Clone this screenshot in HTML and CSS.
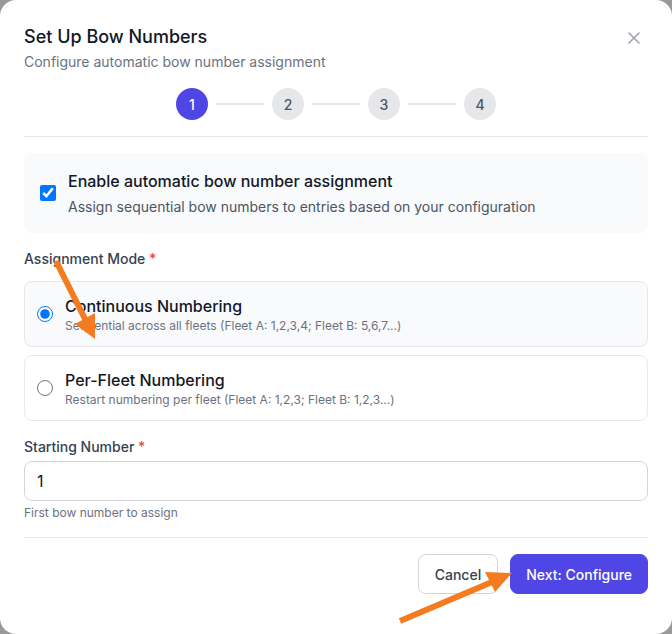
FILE: index.html
```html
<!DOCTYPE html>
<html lang="en">
<head>
<meta charset="utf-8">
<title>Set Up Bow Numbers</title>
<link rel="stylesheet" href="styles.css">
</head>
<body>
<div class="dialog">
  <div class="header">
    <div class="titles">
      <h2 class="title">Set Up Bow Numbers</h2>
      <p class="subtitle">Configure automatic bow number assignment</p>
    </div>
    <button class="close" aria-label="Close">
      <svg width="12" height="12" viewBox="0 0 12 12"><path d="M1 1L11 11M11 1L1 11" stroke="#9ca3af" stroke-width="1.6" stroke-linecap="round"/></svg>
    </button>
  </div>
  <div class="stepper">
    <span class="step active">1</span><span class="bar"></span>
    <span class="step">2</span><span class="bar"></span>
    <span class="step">3</span><span class="bar"></span>
    <span class="step">4</span>
  </div>
  <hr class="divider">
  <div class="content">
    <label class="enable-card">
      <input type="checkbox" class="check" checked>
      <span class="enable-text">
        <span class="enable-title">Enable automatic bow number assignment</span>
        <span class="enable-desc">Assign sequential bow numbers to entries based on your configuration</span>
      </span>
    </label>

    <div class="field">
      <div class="label">Assignment Mode <span class="req">*</span></div>
      <div class="options">
        <label class="option selected">
          <input type="radio" name="mode" class="radio" checked>
          <span class="opt-text">
            <span class="opt-title">Continuous Numbering</span>
            <span class="opt-desc">Sequential across all fleets (Fleet A: 1,2,3,4; Fleet B: 5,6,7...)</span>
          </span>
        </label>
        <label class="option">
          <input type="radio" name="mode" class="radio">
          <span class="opt-text">
            <span class="opt-title">Per-Fleet Numbering</span>
            <span class="opt-desc">Restart numbering per fleet (Fleet A: 1,2,3; Fleet B: 1,2,3...)</span>
          </span>
        </label>
      </div>
    </div>

    <div class="field">
      <div class="label label-sm">Starting Number <span class="req">*</span></div>
      <input class="text-input" type="text" value="1">
      <div class="help">First bow number to assign</div>
    </div>
  </div>
  <hr class="divider">
  <div class="footer">
    <button class="btn btn-secondary">Cancel</button>
    <button class="btn btn-primary">Next: Configure</button>
  </div>
</div>
<svg class="annotations" width="672" height="634" viewBox="0 0 672 634">
  <line x1="56" y1="261" x2="86" y2="321" stroke="#f47b20" stroke-width="6"/>
  <polygon points="95,339 75,324 95,313" fill="#f47b20"/>
  <line x1="400" y1="621" x2="492" y2="582" stroke="#f47b20" stroke-width="6"/>
  <polygon points="512,573 495,592 485,572" fill="#f47b20"/>
</svg>
</body>
</html>
```
FILE: styles.css
```css
* { box-sizing: border-box; }
html, body { margin: 0; padding: 0; }
body {
  background: #999999;
  font-family: Inter, "Noto Sans", sans-serif;
  color: #111827;
  width: 672px;
  height: 634px;
  overflow: hidden;
  position: relative;
}
.dialog {
  width: 672px;
  height: 634px;
  background: #ffffff;
  border-radius: 16px;
  padding: 23px 24px 0;
}
.header {
  display: flex;
  justify-content: space-between;
  align-items: flex-start;
}
.title {
  margin: 0;
  font-size: 18px;
  line-height: 28px;
  font-weight: 500;
  color: #111827;
}
.subtitle {
  margin: 1px 0 0;
  font-size: 14px;
  line-height: 20px;
  color: #6b7280;
}
.close {
  border: 0;
  background: none;
  padding: 0;
  margin: 9px 8px 0 0;
  width: 12px;
  height: 12px;
  display: flex;
}
.stepper {
  margin-top: 16px;
  display: flex;
  justify-content: center;
  align-items: center;
  gap: 8px;
}
.step {
  width: 32px;
  height: 32px;
  border-radius: 50%;
  background: #e5e7eb;
  color: #4b5563;
  font-size: 14px;
  font-weight: 500;
  display: flex;
  align-items: center;
  justify-content: center;
}
.step.active {
  background: #4f46e5;
  color: #ffffff;
}
.bar {
  width: 48px;
  height: 2px;
  background: #e5e7eb;
}
.divider {
  margin: 16px 0 0;
  border: 0;
  border-top: 1px solid #e5e7eb;
  height: 0;
}
.content {
  padding-top: 16px;
  display: flex;
  flex-direction: column;
  gap: 16px;
}
.enable-card {
  background: #f9fafb;
  border-radius: 8px;
  padding: 16px;
  display: flex;
  align-items: center;
  gap: 12px;
}
.check {
  width: 16px;
  height: 16px;
  margin: 0;
  flex: none;
}
.enable-text {
  display: flex;
  flex-direction: column;
  gap: 4px;
}
.enable-title {
  font-size: 16px;
  line-height: 24px;
  font-weight: 500;
  color: #111827;
}
.enable-desc {
  font-size: 14px;
  line-height: 20px;
  color: #4b5563;
}
.label {
  font-size: 14px;
  line-height: 20px;
  font-weight: 500;
  color: #374151;
  margin-bottom: 12px;
}
.label-sm { margin-bottom: 4px; }
.req { color: #ef4444; }
.options {
  display: flex;
  flex-direction: column;
  gap: 8px;
}
.option {
  border: 1px solid #e5e7eb;
  border-radius: 8px;
  padding: 12px;
  display: flex;
  align-items: center;
  gap: 12px;
  background: #ffffff;
}
.option.selected { background: #f9fafb; }
.radio {
  width: 16px;
  height: 16px;
  margin: 0;
  flex: none;
}
.opt-text {
  display: flex;
  flex-direction: column;
}
.opt-title {
  font-size: 16px;
  line-height: 24px;
  font-weight: 500;
  color: #111827;
}
.opt-desc {
  font-size: 12px;
  line-height: 16px;
  color: #6b7280;
}
.text-input {
  display: block;
  width: 100%;
  height: 40px;
  border: 1px solid #d1d5db;
  border-radius: 8px;
  padding: 0 12px;
  font-family: Inter, sans-serif;
  font-size: 16px;
  color: #111827;
  background: #ffffff;
}
.help {
  margin-top: 4px;
  font-size: 12px;
  line-height: 16px;
  color: #6b7280;
}
.footer {
  padding-top: 16px;
  display: flex;
  justify-content: flex-end;
  gap: 12px;
}
.btn {
  height: 40px;
  padding: 0 16px;
  border-radius: 8px;
  font-family: Inter, sans-serif;
  font-size: 14px;
  font-weight: 500;
}
.btn-secondary {
  background: #ffffff;
  border: 1px solid #d1d5db;
  color: #374151;
}
.btn-primary {
  background: #4f46e5;
  border: 1px solid #4f46e5;
  color: #ffffff;
  padding: 0 15px;
}
.annotations {
  position: absolute;
  left: 0;
  top: 0;
  pointer-events: none;
}
```
